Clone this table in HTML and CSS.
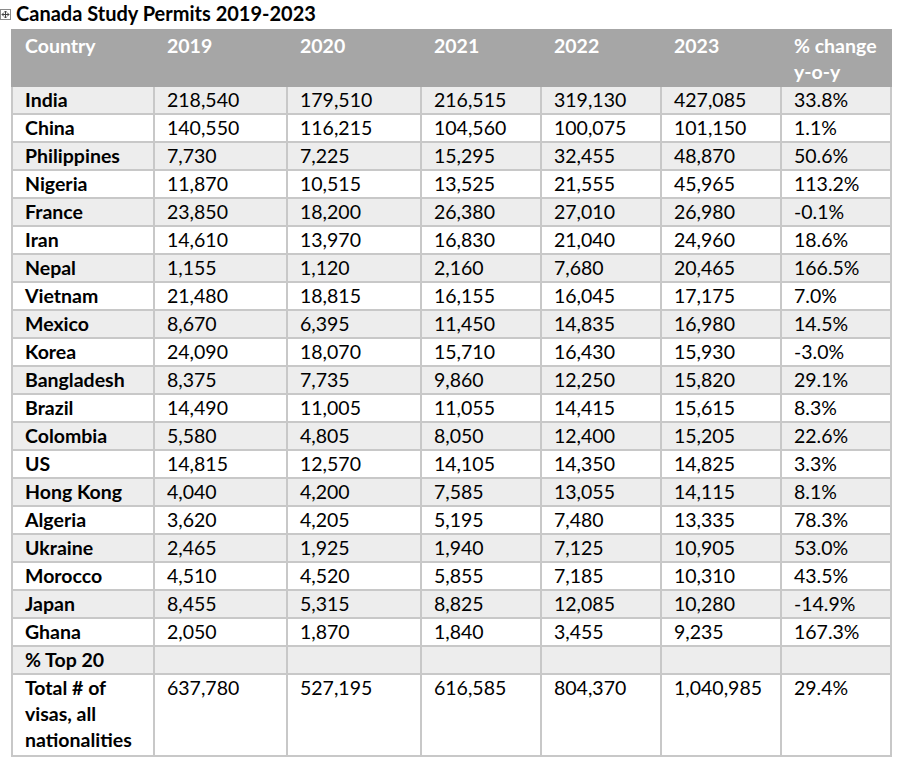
FILE: index.html
```html
<!DOCTYPE html>
<html>
<head>
<meta charset="utf-8">
<link rel="stylesheet" href="styles.css">
</head>
<body>
<div class="page">
  <div class="title-row">
    <span class="move-handle">
      <svg width="11" height="11" viewBox="0 0 11 11">
        <rect x="0.5" y="0.5" width="10" height="10" fill="#fff" stroke="#8a8a8a"/>
        <path d="M2 5.5H9M5.5 2V9" stroke="#444" stroke-width="1"/>
        <path d="M2 5.5l1.5-1.5M2 5.5l1.5 1.5M9 5.5L7.5 4M9 5.5L7.5 7M5.5 2L4 3.5M5.5 2L7 3.5M5.5 9L4 7.5M5.5 9L7 7.5" stroke="#444" stroke-width="1" fill="none"/>
      </svg>
    </span>
    <h1 class="title">Canada Study Permits 2019-2023</h1>
  </div>
  <div class="table-wrap">
    <table class="permits">
      <colgroup>
        <col class="c-country"><col class="c-2019"><col class="c-2020"><col class="c-2021"><col class="c-2022"><col class="c-2023"><col class="c-change">
      </colgroup>
      <thead>
        <tr><th>Country</th><th>2019</th><th>2020</th><th>2021</th><th>2022</th><th>2023</th><th>% change y-o-y</th></tr>
      </thead>
      <tbody>
        <tr><td class="name">India</td><td>218,540</td><td>179,510</td><td>216,515</td><td>319,130</td><td>427,085</td><td>33.8%</td></tr>
        <tr><td class="name">China</td><td>140,550</td><td>116,215</td><td>104,560</td><td>100,075</td><td>101,150</td><td>1.1%</td></tr>
        <tr><td class="name">Philippines</td><td>7,730</td><td>7,225</td><td>15,295</td><td>32,455</td><td>48,870</td><td>50.6%</td></tr>
        <tr><td class="name">Nigeria</td><td>11,870</td><td>10,515</td><td>13,525</td><td>21,555</td><td>45,965</td><td>113.2%</td></tr>
        <tr><td class="name">France</td><td>23,850</td><td>18,200</td><td>26,380</td><td>27,010</td><td>26,980</td><td>-0.1%</td></tr>
        <tr><td class="name">Iran</td><td>14,610</td><td>13,970</td><td>16,830</td><td>21,040</td><td>24,960</td><td>18.6%</td></tr>
        <tr><td class="name">Nepal</td><td>1,155</td><td>1,120</td><td>2,160</td><td>7,680</td><td>20,465</td><td>166.5%</td></tr>
        <tr><td class="name">Vietnam</td><td>21,480</td><td>18,815</td><td>16,155</td><td>16,045</td><td>17,175</td><td>7.0%</td></tr>
        <tr><td class="name">Mexico</td><td>8,670</td><td>6,395</td><td>11,450</td><td>14,835</td><td>16,980</td><td>14.5%</td></tr>
        <tr><td class="name">Korea</td><td>24,090</td><td>18,070</td><td>15,710</td><td>16,430</td><td>15,930</td><td>-3.0%</td></tr>
        <tr><td class="name">Bangladesh</td><td>8,375</td><td>7,735</td><td>9,860</td><td>12,250</td><td>15,820</td><td>29.1%</td></tr>
        <tr><td class="name">Brazil</td><td>14,490</td><td>11,005</td><td>11,055</td><td>14,415</td><td>15,615</td><td>8.3%</td></tr>
        <tr><td class="name">Colombia</td><td>5,580</td><td>4,805</td><td>8,050</td><td>12,400</td><td>15,205</td><td>22.6%</td></tr>
        <tr><td class="name">US</td><td>14,815</td><td>12,570</td><td>14,105</td><td>14,350</td><td>14,825</td><td>3.3%</td></tr>
        <tr><td class="name">Hong Kong</td><td>4,040</td><td>4,200</td><td>7,585</td><td>13,055</td><td>14,115</td><td>8.1%</td></tr>
        <tr><td class="name">Algeria</td><td>3,620</td><td>4,205</td><td>5,195</td><td>7,480</td><td>13,335</td><td>78.3%</td></tr>
        <tr><td class="name">Ukraine</td><td>2,465</td><td>1,925</td><td>1,940</td><td>7,125</td><td>10,905</td><td>53.0%</td></tr>
        <tr><td class="name">Morocco</td><td>4,510</td><td>4,520</td><td>5,855</td><td>7,185</td><td>10,310</td><td>43.5%</td></tr>
        <tr><td class="name">Japan</td><td>8,455</td><td>5,315</td><td>8,825</td><td>12,085</td><td>10,280</td><td>-14.9%</td></tr>
        <tr><td class="name">Ghana</td><td>2,050</td><td>1,870</td><td>1,840</td><td>3,455</td><td>9,235</td><td>167.3%</td></tr>
        <tr><td class="name">% Top 20</td><td></td><td></td><td></td><td></td><td></td><td></td></tr>
        <tr class="total"><td class="name">Total # of visas, all nationalities</td><td>637,780</td><td>527,195</td><td>616,585</td><td>804,370</td><td>1,040,985</td><td>29.4%</td></tr>
      </tbody>
    </table>
    <span class="resize-handle"></span>
  </div>
</div>
</body>
</html>
```
FILE: styles.css
```css
html, body {
  margin: 0;
  padding: 0;
  background: #ffffff;
}

.page {
  font-family: Lato, "Open Sans", sans-serif;
  color: #000000;
  padding-top: 1px;
}

.title-row {
  display: flex;
  align-items: flex-start;
  height: 27px;
  margin-bottom: 1px;
}

.move-handle {
  display: block;
  width: 11px;
  height: 11px;
  margin-top: 8px;
}

.move-handle svg {
  display: block;
}

.title {
  margin: 0 0 0 5px;
  font-size: 20px;
  line-height: 25px;
  font-weight: 700;
}

.table-wrap {
  position: relative;
  margin-left: 11px;
  width: 880px;
}

.permits {
  border-collapse: collapse;
  table-layout: fixed;
  width: 879px;
  font-size: 19.5px;
  line-height: 26px;
}

.c-country { width: 142px; }
.c-2019 { width: 133px; }
.c-2020 { width: 134px; }
.c-2021 { width: 120px; }
.c-2022 { width: 120px; }
.c-2023 { width: 120px; }
.c-change { width: 110px; }

.permits th {
  background: #a6a6a6;
  color: #ffffff;
  font-weight: 700;
  text-align: left;
  vertical-align: top;
  padding: 2px 10px 0 12px;
  border: 2px solid #a6a6a6;
}

.permits td {
  padding: 0 8px 0 12px;
  border: 2px solid #c8c8c8;
  vertical-align: top;
  white-space: nowrap;
}

.permits td.name {
  font-weight: 700;
  white-space: normal;
}

.permits tbody tr:nth-child(odd) td {
  background: #ededed;
}

.permits tr.total td {
  padding-bottom: 2px;
}

.resize-handle {
  position: absolute;
  right: -8px;
  bottom: -9px;
  width: 6px;
  height: 6px;
  border: 1px solid #8a8a8a;
  background: #ffffff;
}
```
